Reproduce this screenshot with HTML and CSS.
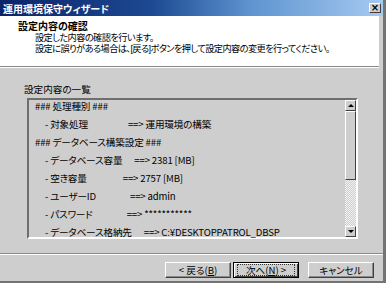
FILE: index.html
```html
<!DOCTYPE html>
<html>

<head>
    <title>運用環境保守ウィザード</title>
    <link rel="stylesheet" href="styles.css">
</head>

<body>
    <div class="window">
        <div class="titlebar">
            <span class="title">運用環境保守ウィザード</span>
            <span class="close">×</span>
        </div>

        <div class="header">
            <div class="heading">設定内容の確認</div>
            <div class="desc">
                <div>設定した内容の確認を行います。</div>
                <div>設定に誤りがある場合は、[戻る]ボタンを押して設定内容の変更を行ってください。</div>
            </div>
        </div>

        <div class="content">
            <div class="list-label">設定内容の一覧</div>
            <div class="listbox">
                <div class="rows">
                    <div class="row">### 処理種別 ###</div>
                    <div class="row item">- 対象処理                    ==> 運用環境の構築</div>
                    <div class="row">### データベース構築設定 ###</div>
                    <div class="row item">- データベース容量      ==> 2381 [MB]</div>
                    <div class="row item">- 空き容量                  ==> 2757 [MB]</div>
                    <div class="row item">- ユーザーID                 ==> admin</div>
                    <div class="row item">- パスワード                 ==> ***********</div>
                    <div class="row item">- データベース格納先      ==> C:¥DESKTOPPATROL_DBSP</div>
                </div>
                <div class="scrollbar">
                    <div class="sb-btn"><span class="arrow-up"></span></div>
                    <div class="sb-thumb"></div>
                    <div class="sb-track"></div>
                    <div class="sb-btn"><span class="arrow-down"></span></div>
                </div>
            </div>
        </div>

        <div class="footer">
            <button class="btn">&lt; 戻る(<u>B</u>)</button>
            <button class="btn default"><span class="focus">次へ(<u>N</u>) &gt;</span></button>
            <button class="btn cancel">キャンセル</button>
        </div>
    </div>
</body>

</html>
```

FILE: styles.css
```css
body {
    margin: 0;
    font-family: "Liberation Sans Narrow", "Noto Sans CJK JP", sans-serif;
    font-size: 9.6px;
    color: #000;
    background-color: #cecece;
}

.window {
    width: 386px;
    height: 283px;
    box-sizing: border-box;
    border-right: 3px solid #747474;
    border-bottom: 2px solid #747474;
    background-color: #cecece;
    display: flex;
    flex-direction: column;
    overflow: hidden;
}

.titlebar {
    height: 16px;
    display: flex;
    align-items: center;
    justify-content: space-between;
    padding: 0 2px 0 3px;
    background: linear-gradient(to right, #0a246a 0%, #1d4a92 40%, #5d93d0 65%, #a6caf0 100%);
}

.title {
    color: #fff;
    font-family: "Noto Sans CJK JP", sans-serif;
    font-weight: bold;
    font-size: 10px;
    font-feature-settings: "palt";
}

.close {
    width: 12px;
    height: 10px;
    box-sizing: border-box;
    background-color: #cecece;
    border-top: 1px solid #fff;
    border-left: 1px solid #fff;
    border-right: 1px solid #404040;
    border-bottom: 1px solid #404040;
    font-family: "DejaVu Sans", sans-serif;
    font-weight: bold;
    font-size: 10px;
    line-height: 7px;
    text-align: center;
}

.header {
    height: 45px;
    margin-right: 4px;
    background-color: #fff;
    border-bottom: 1px solid #8a8a8a;
    box-shadow: 0 1px 0 #fff;
    padding: 5px 0 0 18px;
    box-sizing: content-box;
    font-family: "Liberation Sans", "Noto Sans CJK JP", sans-serif;
    font-feature-settings: "palt";
}

.heading {
    font-weight: bold;
    font-size: 10px;
    line-height: 12px;
}

.desc {
    padding-left: 17px;
    font-size: 9.2px;
    line-height: 11px;
    letter-spacing: -0.58px;
}

.content {
    height: 170px;
    padding: 16px 0 0 24px;
    box-sizing: content-box;
}

.list-label {
    line-height: 12px;
    font-family: "Noto Sans CJK JP", sans-serif;
    font-feature-settings: "palt";
    margin-bottom: 3px;
}

.listbox {
    margin-left: 3px;
    width: 331px;
    height: 141px;
    box-sizing: border-box;
    border-top: 2px solid #6e6e6e;
    border-left: 2px solid #6e6e6e;
    border-right: 2px solid #fff;
    border-bottom: 2px solid #fff;
    display: flex;
}

.rows {
    flex: 1;
    padding-left: 6px;
    font-feature-settings: "palt";
    letter-spacing: -0.15px;
}

.row {
    height: 18px;
    line-height: 12px;
    white-space: pre;
}

.row.item {
    padding-left: 10px;
}

.scrollbar {
    width: 11px;
    display: flex;
    flex-direction: column;
}

.sb-btn {
    height: 11px;
    box-sizing: border-box;
    background-color: #cecece;
    border-top: 1px solid #fff;
    border-left: 1px solid #fff;
    border-right: 1px solid #404040;
    border-bottom: 1px solid #404040;
    display: flex;
    align-items: center;
    justify-content: center;
}

.arrow-up {
    border-left: 3px solid transparent;
    border-right: 3px solid transparent;
    border-bottom: 3px solid #000;
}

.arrow-down {
    border-left: 3px solid transparent;
    border-right: 3px solid transparent;
    border-top: 3px solid #000;
}

.sb-thumb {
    height: 69px;
    box-sizing: border-box;
    background-color: #cecece;
    border-top: 1px solid #fff;
    border-left: 1px solid #fff;
    border-right: 1px solid #404040;
    border-bottom: 1px solid #404040;
}

.sb-track {
    flex: 1;
    background: repeating-conic-gradient(#f2f2f2 0 25%, #cecece 0 50%) 0 0 / 2px 2px;
}

.footer {
    flex: 1;
    border-top: 1px solid #8a8a8a;
    box-shadow: inset 0 1px 0 #fff;
    display: flex;
    justify-content: flex-end;
    align-items: flex-start;
    padding: 8px 9px 0 0;
}

.btn {
    width: 66px;
    height: 16px;
    padding: 0;
    margin-left: 2px;
    background-color: #cecece;
    border-top: 1px solid #fff;
    border-left: 1px solid #fff;
    border-right: 1px solid #404040;
    border-bottom: 1px solid #404040;
    box-shadow: inset -1px -1px 0 #8a8a8a;
    font-family: "Liberation Sans Narrow", "Noto Sans CJK JP", sans-serif;
    font-size: 9.6px;
    line-height: 12px;
    font-feature-settings: "palt";
    color: #000;
}

.btn.default {
    border: 1px solid #000;
    box-shadow: inset 1px 1px 0 #fff, inset -1px -1px 0 #404040;
}

.btn .focus {
    display: block;
    margin: 0 3px;
    border: 1px dotted #333;
    line-height: 10px;
}

.btn.cancel {
    margin-left: 9px;
}
```
